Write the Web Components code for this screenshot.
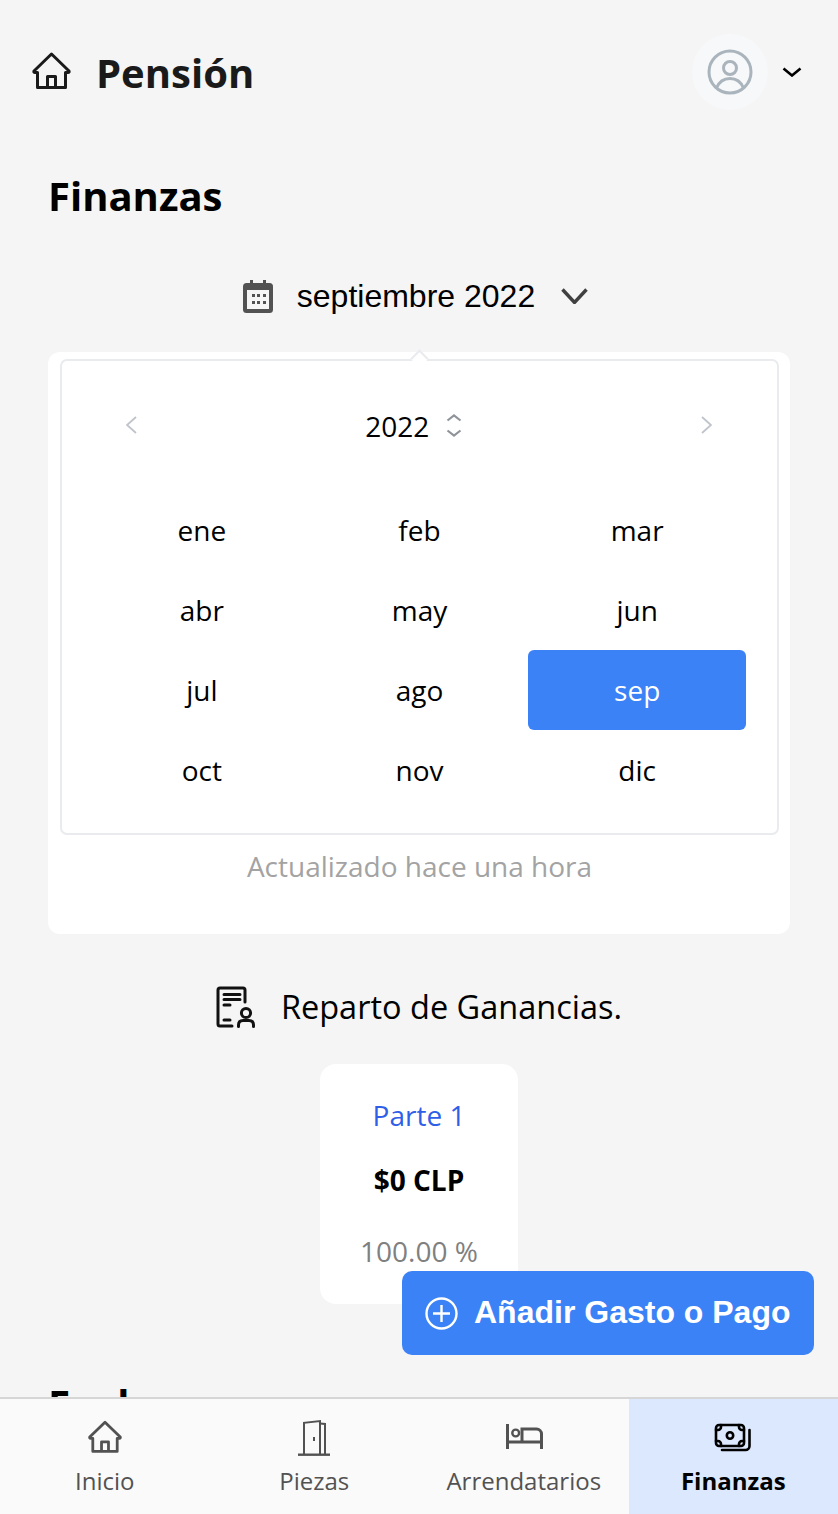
<!DOCTYPE html>
<html lang="es">
<head>
<meta charset="utf-8">
<title>Pensión - Finanzas</title>
<style>
  html, body { margin: 0; padding: 0; background: #f5f5f5; }
  body { font-family: "Open Sans", "Liberation Sans", sans-serif; }
</style>
</head>
<body>
<pension-app>
  <app-header slot="header" title="Pensión"></app-header>
  <page-title>Finanzas</page-title>
  <date-select label="septiembre 2022"></date-select>
  <info-card>
    <month-calendar year="2022" selected="sep"></month-calendar>
    <span slot="note">Actualizado hace una hora</span>
  </info-card>
  <share-heading>Reparto de Ganancias.</share-heading>
  <share-card name="Parte 1" amount="$0 CLP" percent="100.00 %"></share-card>
  <page-title class="next">Evaluar</page-title>
  <add-button slot="fab">Añadir Gasto o Pago</add-button>
  <bottom-nav slot="nav">
    <nav-item icon="home" style="--ink:#525252">Inicio</nav-item>
    <nav-item icon="door" style="--ink:#525252">Piezas</nav-item>
    <nav-item icon="bed" style="--ink:#525252">Arrendatarios</nav-item>
    <nav-item icon="money" active>Finanzas</nav-item>
  </bottom-nav>
</pension-app>

<script>
(function () {
  // ---- icons, coordinates read off the reference ----
  var ICONS = {
    home: '<svg width="34" height="34" viewBox="0 0 39 38" fill="none" stroke="currentColor" stroke-width="3.2" stroke-linejoin="round"><path d="M19.5 2 L37 19 Q37.5 20.5 36 20.5 H33.5 V35.5 H5.5 V20.5 H3 Q1.5 20.5 2 19 Z"/><path d="M15.5 35.5 V24.5 H23.5 V35.5"/></svg>',
    door: '<svg width="33" height="38" viewBox="0 0 33 38" fill="none" stroke="currentColor" stroke-width="2"><path d="M0 36.7 H32" stroke-width="2.4"/><path d="M6 36.7 V4.8 L22 3 V36.7"/><path d="M22 5.5 L27 6 V36.7"/><path d="M16 19 V23"/></svg>',
    bed: '<svg width="40" height="32" viewBox="0 0 40 32" fill="none" stroke="currentColor" stroke-width="3"><path d="M3.5 3 V28"/><path d="M3.5 21 H37.5"/><path d="M37.5 28 V13 A5 5 0 0 0 32.5 8 H18 V21"/><circle cx="11.7" cy="12" r="3.4" stroke-width="2.4"/></svg>',
    money: '<svg width="40" height="30" viewBox="0 0 40 30" fill="none" stroke="currentColor" stroke-width="2.6" stroke-linecap="round"><rect x="3" y="3" width="28" height="21" rx="3"/><circle cx="17" cy="13.5" r="3.2"/><path d="M3 8 H5 A3 3 0 0 0 8 5 V3"/><path d="M31 8 H29 A3 3 0 0 1 26 5 V3"/><path d="M3 19 H5 A3 3 0 0 1 8 22 V24"/><path d="M31 19 H29 A3 3 0 0 0 26 22 V24"/><path d="M36.5 8 V24 A4 4 0 0 1 32.5 28 H9"/></svg>'
  };

  function chevron(w, h, color, sw, dir) {
    var d = { down: 'M1.5 1.5 L' + w / 2 + ' ' + (h - 1.5) + ' L' + (w - 1.5) + ' 1.5',
              up: 'M1.5 ' + (h - 1.5) + ' L' + w / 2 + ' 1.5 L' + (w - 1.5) + ' ' + (h - 1.5),
              left: 'M' + (w - 1) + ' 1 L1 ' + h / 2 + ' L' + (w - 1) + ' ' + (h - 1),
              right: 'M1 1 L' + (w - 1) + ' ' + h / 2 + ' L1 ' + (h - 1) }[dir];
    return '<svg width="' + w + '" height="' + h + '" viewBox="0 0 ' + w + ' ' + h + '" fill="none" stroke="' + color + '" stroke-width="' + sw + '"><path d="' + d + '"/></svg>';
  }

  class Base extends HTMLElement {
    connectedCallback() {
      var root = this.shadowRoot || this.attachShadow({ mode: 'open' });
      root.innerHTML = this.html();
    }
  }

  class PensionApp extends Base {
    html() {
      return '<style>' +
        ':host{display:flex;flex-direction:column;position:relative;width:100%;height:100vh;overflow:hidden;background:#f5f5f5;}' +
        'main{flex:1;min-height:0;overflow:hidden;}' +
        '.fab{position:absolute;left:402px;top:1271px;}' +
        '</style>' +
        '<slot name="header"></slot>' +
        '<main><slot></slot></main>' +
        '<div class="fab"><slot name="fab"></slot></div>' +
        '<slot name="nav"></slot>';
    }
  }

  class AppHeader extends Base {
    html() {
      return '<style>' +
        ':host{display:flex;align-items:center;justify-content:space-between;padding:34px 36px 0 32px;}' +
        '.left{display:flex;align-items:center;gap:25px;}' +
        '.left svg{display:block;margin-top:-2px;}' +
        'b{padding-top:2px;font-size:40px;line-height:52px;font-weight:700;color:#1a1a1a;}' +
        '.right{display:flex;align-items:center;gap:14px;}' +
        '.avatar{width:76px;height:76px;border-radius:50%;background:#f7f8fa;display:flex;align-items:center;justify-content:center;}' +
        '</style>' +
        '<div class="left">' +
          '<svg width="39" height="38" viewBox="0 0 39 38" fill="none" stroke="#1a1a1a" stroke-width="3" stroke-linejoin="round"><path d="M19.5 2 L37 19 Q37.5 20.5 36 20.5 H33.5 V35.5 H5.5 V20.5 H3 Q1.5 20.5 2 19 Z"/><path d="M15.5 35.5 V24.5 H23.5 V35.5"/></svg>' +
          '<b>' + this.getAttribute('title') + '</b>' +
        '</div>' +
        '<div class="right">' +
          '<span class="avatar"><svg width="46" height="46" viewBox="0 0 46 46" fill="none" stroke="#aab4bc" stroke-width="3"><circle cx="23" cy="23" r="21"/><circle cx="23" cy="19" r="6.5"/><path d="M9.5 39 C12 33 17 29.5 23 29.5 C29 29.5 34 33 36.5 39"/></svg></span>' +
          chevron(20, 10, '#000', 2.6, 'down') +
        '</div>';
    }
  }

  class PageTitle extends Base {
    html() {
      var next = this.classList.contains('next');
      return '<style>' +
        ':host{display:block;margin:' + (next ? '76px' : '62px') + ' 48px 0 48px;font-size:40px;line-height:48px;font-weight:700;color:#000;}' +
        '</style><slot></slot>';
    }
  }

  class DateSelect extends Base {
    html() {
      return '<style>' +
        ':host{display:flex;align-items:center;justify-content:center;height:44px;margin:54px 0 34px;padding-right:7px;font-family:"Liberation Sans",Arial,sans-serif;font-size:32px;color:#000;}' +
        'span{margin:0 26px 0 24px;}' +
        '</style>' +
        '<svg width="30" height="33" viewBox="0 0 30 33" fill="#525252"><rect x="0" y="3" width="30" height="30" rx="3.5"/><rect x="7" y="0" width="3" height="6"/><rect x="20" y="0" width="3" height="6"/><rect x="4" y="10" width="22" height="19" fill="#f5f5f5"/><g><rect x="9" y="14" width="3" height="3"/><rect x="14" y="14" width="3" height="3"/><rect x="20" y="14" width="3" height="3"/><rect x="9" y="21" width="3" height="3"/><rect x="14" y="21" width="3" height="3"/><rect x="20" y="21" width="3" height="3"/></g></svg>' +
        '<span>' + this.getAttribute('label') + '</span>' +
        chevron(27, 16, '#404040', 3.4, 'down');
    }
  }

  class InfoCard extends Base {
    html() {
      return '<style>' +
        ':host{display:block;margin:0 48px;padding:7px 11px 50px 12px;background:#fff;border-radius:12px;}' +
        '.note{margin-top:13px;text-align:center;font-size:28px;line-height:36px;color:#a3a3a3;}' +
        '</style>' +
        '<slot></slot><div class="note"><slot name="note"></slot></div>';
    }
  }

  class MonthCalendar extends Base {
    html() {
      var sel = this.getAttribute('selected');
      var months = ['ene', 'feb', 'mar', 'abr', 'may', 'jun', 'jul', 'ago', 'sep', 'oct', 'nov', 'dic'];
      return '<style>' +
        ':host{display:block;position:relative;box-sizing:border-box;height:476px;padding:39px 31px 0;border:2px solid #e9ebee;border-radius:7px;background:#fff;}' +
        '.tail{position:absolute;left:351px;top:-9px;width:13px;height:13px;background:#fff;border-left:2px solid #e9ebee;border-top:2px solid #e9ebee;box-sizing:border-box;transform:rotate(45deg);}' +
        '.head{display:flex;align-items:center;justify-content:space-between;height:50px;padding:0 34px 0 33px;margin-bottom:40px;}' +
        '.year{display:flex;align-items:center;gap:17px;margin-left:-10.5px;font-size:28px;color:#000;}' +
        '.year span:first-child{padding-top:2px;}' +
        '.spin{display:flex;flex-direction:column;gap:7px;}' +
        'svg{display:block;}' +
        '.grid{display:grid;grid-template-columns:repeat(3,1fr);grid-auto-rows:80px;}' +
        '.m{display:flex;align-items:center;justify-content:center;font-size:28px;color:#000;border-radius:6px;}' +
        '.m.on{background:#3b82f6;color:#fff;}' +
        '</style>' +
        '<div class="tail"></div>' +
        '<div class="head">' +
          chevron(11, 18, '#bfc4cb', 1.8, 'left') +
          '<div class="year"><span>' + this.getAttribute('year') + '</span><span class="spin">' +
            chevron(16, 8, '#8f949b', 2.2, 'up') + chevron(16, 8, '#8f949b', 2.2, 'down') +
          '</span></div>' +
          chevron(11, 18, '#bfc4cb', 1.8, 'right') +
        '</div>' +
        '<div class="grid">' + months.map(function (m) {
          return '<div class="m' + (m === sel ? ' on' : '') + '">' + m + '</div>';
        }).join('') + '</div>';
    }
  }

  class ShareHeading extends Base {
    html() {
      return '<style>' +
        ':host{display:flex;align-items:center;justify-content:center;gap:25px;height:44px;margin-top:51px;font-size:32.5px;color:#000;}' +
        'svg{display:block;}' +
        'span{padding-bottom:2px;}' +
        '</style>' +
        '<svg width="40" height="42" viewBox="0 0 40 42" fill="none" stroke="#111" stroke-width="3" stroke-linecap="round" stroke-linejoin="round"><path d="M16 40 H4 Q2 40 2 38 V4 Q2 2 4 2 H27 Q29 2 29 4 V16"/><path d="M8 8.5 H24 M8 13.5 H24 M8 19 H14 M8 34 H14"/><circle cx="30" cy="27" r="4.6"/><path d="M22.5 40.5 V39 Q22.5 34.5 27 34.5 H33 Q37.5 34.5 37.5 39 V40.5"/></svg>' +
        '<span><slot></slot></span>';
    }
  }

  class ShareCard extends Base {
    html() {
      return '<style>' +
        ':host{display:flex;flex-direction:column;align-items:center;box-sizing:border-box;width:198px;height:240px;margin:35px auto 0;padding-top:31px;background:#fff;border-radius:16px;font-size:28px;line-height:40px;}' +
        '.n{color:#2f5fe8;}' +
        '.a{margin-top:25px;font-weight:700;color:#000;}' +
        '.p{margin-top:31px;color:#808080;}' +
        '</style>' +
        '<div class="n">' + this.getAttribute('name') + '</div>' +
        '<div class="a">' + this.getAttribute('amount') + '</div>' +
        '<div class="p">' + this.getAttribute('percent') + '</div>';
    }
  }

  class AddButton extends Base {
    html() {
      return '<style>' +
        ':host{display:flex;align-items:center;gap:16px;box-sizing:border-box;width:412px;height:84px;padding-left:23px;background:#3b82f6;border-radius:10px;color:#fff;font-family:"Liberation Sans",Arial,sans-serif;font-weight:700;font-size:32px;white-space:nowrap;}' +
        'svg{display:block;}' +
        'span{padding-bottom:2px;}' +
        '</style>' +
        '<svg width="33" height="33" viewBox="0 0 33 33" fill="none" stroke="#fff" stroke-width="2.4"><circle cx="16.5" cy="16.5" r="15"/><path d="M16.5 8 V25 M8 16.5 H25"/></svg>' +
        '<span><slot></slot></span>';
    }
  }

  class BottomNav extends Base {
    html() {
      return '<style>' +
        ':host{display:grid;grid-template-columns:repeat(4,1fr);height:117px;box-sizing:border-box;border-top:2px solid #d6d6d6;background:#fafafa;}' +
        '</style><slot></slot>';
    }
  }

  class NavItem extends Base {
    html() {
      var on = this.hasAttribute('active');
      return '<style>' +
        ':host{display:flex;flex-direction:column;align-items:center;box-sizing:border-box;padding-top:19px;' +
          'color:var(--ink,#000);background:' + (on ? '#dbe8fe' : 'transparent') + ';font-size:24px;font-weight:' + (on ? 700 : 400) + ';}' +
        '.i{height:38px;display:flex;align-items:center;justify-content:center;}' +
        'svg{display:block;}' +
        '.t{margin-top:8px;line-height:34px;}' +
        '</style>' +
        '<div class="i">' + ICONS[this.getAttribute('icon')] + '</div>' +
        '<div class="t"><slot></slot></div>';
    }
  }

  customElements.define('pension-app', PensionApp);
  customElements.define('app-header', AppHeader);
  customElements.define('page-title', PageTitle);
  customElements.define('date-select', DateSelect);
  customElements.define('info-card', InfoCard);
  customElements.define('month-calendar', MonthCalendar);
  customElements.define('share-heading', ShareHeading);
  customElements.define('share-card', ShareCard);
  customElements.define('add-button', AddButton);
  customElements.define('bottom-nav', BottomNav);
  customElements.define('nav-item', NavItem);
})();
</script>
</body>
</html>
